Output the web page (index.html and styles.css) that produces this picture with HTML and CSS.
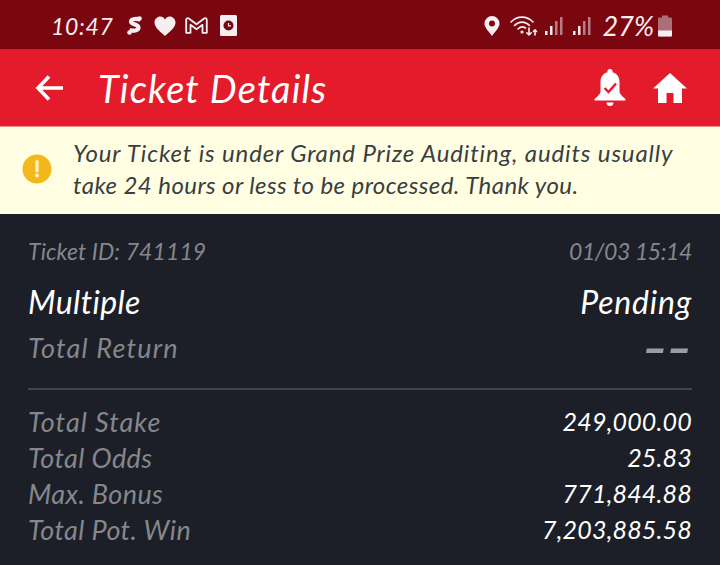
FILE: index.html
```html
<!DOCTYPE html>
<html lang="en">
<head>
<meta charset="utf-8">
<title>Ticket Details</title>
<link rel="stylesheet" href="styles.css">
</head>
<body>
<div class="status">
  <div class="status-left">
    <span class="clock">10:47</span>
    <svg class="ic-s" width="15" height="19" viewBox="0 0 15 19"><path d="M13.500 4C10 2.200 4.500 2.600 4 5.500C3.600 8.500 11.500 8 11.500 11.500C11.500 14.500 6 15.500 2.500 14" fill="none" stroke="#f6eef0" stroke-width="4.200"/><circle cx="2.500" cy="16.500" r="2.300" fill="#f6eef0"/><circle cx="12.500" cy="2.500" r="2.300" fill="#f6eef0"/></svg>
    <svg class="ic-heart" width="22" height="20" viewBox="0 0 22 20"><path d="M11 20C7 16 0.500 12 0.500 6.500C0.500 3 3.500 0.500 6.200 0.500C8.200 0.500 10 1.500 11 3.500C12 1.500 13.800 0.500 15.800 0.500C18.500 0.500 21.500 3 21.500 6.500C21.500 12 15 16 11 20Z" fill="#f6eef0"/></svg>
    <svg class="ic-m" width="23" height="17" viewBox="0 0 23 17"><path d="M1.200 15.800V2.800C1.200 1.200 2.800 0.800 3.800 1.500L11.500 7.300L19.200 1.500C20.200 0.800 21.800 1.200 21.800 2.800V15.800H17.500V7.800L11.500 12.200L5.500 7.800V15.800Z" fill="none" stroke="#f6eef0" stroke-width="1.800" stroke-linejoin="round"/></svg>
    <svg class="ic-doc" width="17" height="21" viewBox="0 0 17 21"><rect width="17" height="21" rx="1.500" fill="#f6eef0"/><circle cx="8.500" cy="10.500" r="5" fill="#7a0710"/><path d="M8.500 8V10.800H11" fill="none" stroke="#f6eef0" stroke-width="1.200"/></svg>
  </div>
  <div class="status-right">
    <svg width="16" height="20" viewBox="0 0 16 20"><path fill-rule="evenodd" d="M8 20C4 14.500 0.500 11.500 0.500 7.500A7.500 7.500 0 0 1 15.500 7.500C15.500 11.500 12 14.500 8 20ZM8 4.500A3 3 0 1 0 8 10.500A3 3 0 0 0 8 4.500Z" fill="#f6eef0"/></svg>
    <svg class="wifi" width="28" height="21" viewBox="0 0 28 21"><g fill="none" stroke="#f6eef0" stroke-width="1.600" stroke-linecap="round"><path d="M1 7C7 0.500 17 0.500 23 7"/><path d="M4.500 10.500C9 6 15 6 19.500 10.500"/><path d="M8 14C10.500 11.500 13.500 11.500 15.500 13"/><path d="M19 13V20M16.800 17.800L19 20M21.200 17.800L19 20"/><path d="M25 20V15M23.500 16.500L25 15L26.500 16.500"/></g><circle cx="12" cy="17" r="1.600" fill="#f6eef0"/></svg>
    <svg class="bars" width="18" height="20" viewBox="0 0 18 20"><g fill="#f6eef0"><rect x="0" y="15" width="2.500" height="4"/><rect x="5" y="10" width="2.500" height="9"/></g><g fill="#b77c84"><rect x="10" y="5" width="2.500" height="14"/><rect x="15" y="1" width="2.500" height="18"/></g></svg>
    <svg class="bars2" width="18" height="20" viewBox="0 0 18 20"><g fill="#f6eef0"><rect x="0" y="15" width="2.500" height="4"/><rect x="5" y="10" width="2.500" height="9"/></g><g fill="#b77c84"><rect x="10" y="5" width="2.500" height="14"/><rect x="15" y="1" width="2.500" height="18"/></g></svg>
    <span class="pct">27%</span>
    <svg width="14" height="22" viewBox="0 0 14 22"><path d="M4 0.500H10V2.500H12.500C13.500 2.500 14 3 14 4V20C14 21 13.500 21.500 12.500 21.500H1.500C0.500 21.500 0 21 0 20V4C0 3 0.500 2.500 1.500 2.500H4Z" fill="#ab6f77"/><path d="M0 15.500H14V20C14 21 13.500 21.500 12.500 21.500H1.500C0.500 21.500 0 21 0 20Z" fill="#f6eef0"/></svg>
  </div>
</div>
<header class="appbar">
  <div class="appbar-left">
    <svg width="30" height="28" viewBox="0 0 30 28"><path d="M28 14H3M14 2.500L3 14L14 25.500" fill="none" stroke="#fff" stroke-width="3.600"/></svg>
    <h1 class="title">Ticket Details</h1>
  </div>
  <div class="appbar-right">
    <svg width="32" height="38" viewBox="0 0 32 38"><path d="M16 0A2.500 2.500 0 0 1 18.500 3.300C23 4.500 25.500 8 25.500 13V22.500C25.500 25 28 27 31.500 30V31.500H0.500V30C4 27 6.500 25 6.500 22.500V13C6.500 8 9 4.500 13.500 3.300A2.500 2.500 0 0 1 16 0Z" fill="#fff"/><path d="M12.500 33.500H19.500C19.500 36 18 37 16 37C14 37 12.500 36 12.500 33.500Z" fill="#fff"/><path d="M10.500 19L14.500 23L22 14.500" fill="none" stroke="#e41b2a" stroke-width="2.400"/></svg>
    <svg width="34" height="30" viewBox="0 0 34 30"><path d="M17 0L34 15.500H29V30H20.500V20H13.500V30H5V15.500H0Z" fill="#fff"/></svg>
  </div>
</header>
<section class="notice">
  <svg class="notice-icon" width="30" height="30" viewBox="0 0 30 30"><circle cx="15" cy="15" r="14.500" fill="#f5b81c"/><path d="M15 7.500V17" stroke="#fff3c0" stroke-width="3.200" stroke-linecap="round"/><circle cx="15" cy="21.500" r="1.900" fill="#fff3c0"/></svg>
  <p class="notice-text"><span class="line-one">Your Ticket is under Grand Prize Auditing, audits usually</span><span class="line-two">take 24 hours or less to be processed. Thank you.</span></p>
</section>
<main class="details">
  <div class="row meta"><span>Ticket ID: 741119</span><span class="stamp">01/03 15:14</span></div>
  <div class="row headline"><span>Multiple</span><span class="state">Pending</span></div>
  <div class="row return"><span>Total Return</span><span class="dash">--</span></div>
  <hr class="rule">
  <dl class="stats">
    <div class="row stat"><dt class="wide">Total Stake</dt><dd>249,000.00</dd></div>
    <div class="row stat"><dt>Total Odds</dt><dd>25.83</dd></div>
    <div class="row stat"><dt>Max. Bonus</dt><dd>771,844.88</dd></div>
    <div class="row stat"><dt>Total Pot. Win</dt><dd>7,203,885.58</dd></div>
  </dl>
</main>
</body>
</html>
```
FILE: styles.css
```css
* { box-sizing: border-box; }
html, body { margin: 0; padding: 0; }
body {
  width: 720px;
  height: 565px;
  overflow: hidden;
  background: #1c1f27;
  font-family: "Lato", "Open Sans", sans-serif;
  font-style: italic;
}
svg { display: block; flex: none; }
.status {
  height: 49px;
  background: #7a0710;
  display: flex;
  justify-content: space-between;
  align-items: center;
  padding: 2px 48px 0 51px;
  color: #f6eef0;
}
.status-left, .status-right { display: flex; align-items: center; }
.clock { width: 61px; font-size: 23px; letter-spacing: 0.700px; }
.ic-s { margin-left: 15px; }
.ic-heart { margin-left: 12px; }
.ic-m { margin-left: 9px; }
.ic-doc { margin-left: 12px; }
.wifi { margin-left: 10px; }
.bars { margin-left: 7px; }
.bars2 { margin-left: 10px; }
.pct { font-size: 27px; margin-left: 12px; margin-right: 4px; }
.appbar {
  height: 77px;
  background: #e41b2a;
  display: flex;
  justify-content: space-between;
  align-items: center;
  padding: 0 33px 0 35px;
  color: #fff;
}
.appbar-left { display: flex; align-items: center; gap: 33px; }
.appbar-right { display: flex; align-items: center; gap: 27px; }
.title { margin: 0; font-size: 38px; font-weight: 400; letter-spacing: 1.100px; }
.notice {
  height: 88px;
  border-top: 1px solid #ee8d86;
  background: #fffee2;
  display: flex;
  align-items: center;
  gap: 21px;
  padding: 0 0 3px 22px;
}
.notice-text {
  margin: 0;
  font-size: 24px;
  line-height: 32px;
  color: #3a3e42;
  white-space: nowrap;
}
.line-one, .line-two { display: block; }
.line-one { letter-spacing: 0.870px; }
.line-two { letter-spacing: 0.430px; }
.details { padding: 21px 28px 0; }
.row { display: flex; justify-content: space-between; align-items: center; }
.meta { height: 32px; font-size: 23px; color: #85878c; letter-spacing: 0.100px; }
.stamp { letter-spacing: -0.400px; }
.headline { height: 46px; margin-top: 11px; font-size: 32px; color: #fff; letter-spacing: 0.400px; }
.state { letter-spacing: 0.800px; }
.return { height: 36px; margin-top: 5px; font-size: 27px; color: #85878c; letter-spacing: 1.200px; }
.dash { font-size: 44px; font-weight: 700; color: #9a9ca0; line-height: 36px; letter-spacing: 0; transform: scaleX(1.6); transform-origin: right center; }
.rule { border: 0; height: 2px; margin: 23px 0 13px; background: #41444b; }
.stats { margin: 0; }
.stat { height: 36px; font-size: 27px; letter-spacing: 0.400px; }
.stat dt { color: #85878c; }
.stat dt.wide { letter-spacing: 1px; }
.stat dd { margin: 0; color: #fff; font-size: 25px; letter-spacing: 0.200px; }
```
